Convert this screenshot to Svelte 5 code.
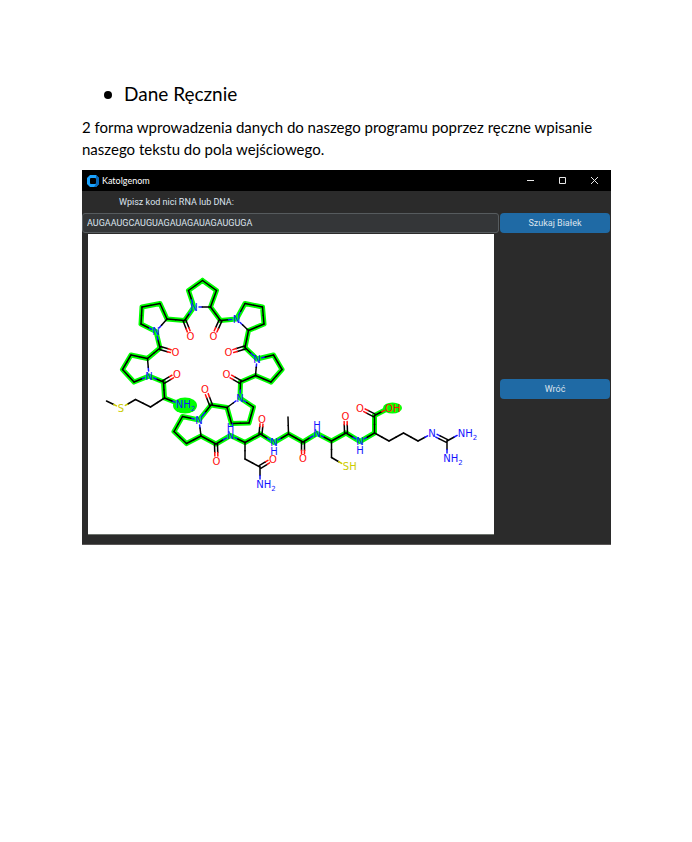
<script>
  let sequence = $state('AUGAAUGCAUGUAGAUAGAUAGAUGUGA');

  const colors = { C: '#000', N: '#1414ff', O: '#ff1010', S: '#cccc00' };

  // id: [x, y, element]
  const atoms = {
    m0: [106.5, 401, 'C'], mS: [121, 408, 'S'], m1: [135.5, 399.5, 'C'], m2: [150.5, 407, 'C'],
    mA: [164.5, 398, 'C'], mN: [179.5, 404, 'N', 'NH', 2], mC: [163.5, 382, 'C'], mO: [177, 374, 'O'],
    aN: [149, 376, 'N'], aA: [147.5, 358.5, 'C'], a1: [131, 355, 'C'], a2: [122.5, 369.5, 'C'], a3: [134, 382, 'C'],
    aC: [160, 348, 'C'], aO: [175.5, 352.5, 'O'],
    bN: [156, 331.5, 'N'], bA: [167, 319, 'C'], b1: [160, 303.5, 'C'], b2: [142, 307, 'C'], b3: [141, 324, 'C'],
    bC: [184.5, 320.5, 'C'], bO: [190.5, 336, 'O'],
    cN: [194, 307, 'N'], cA: [210.5, 307, 'C'], c1: [216.5, 290.5, 'C'], c2: [202.5, 280.5, 'C'], c3: [188.5, 290.5, 'C'],
    cC: [220.5, 320.5, 'C'], cO: [213.5, 336, 'O'],
    dN: [236.5, 319, 'N'], dA: [248.5, 330.5, 'C'], d1: [264, 324, 'C'], d2: [262.5, 307, 'C'], d3: [245, 303.5, 'C'],
    dC: [245, 347.5, 'C'], dO: [228.5, 352.5, 'O'],
    eN: [257, 359, 'N'], eA: [255.5, 375.5, 'C'], e1: [271, 382, 'C'], e2: [282, 369.5, 'C'], e3: [273.5, 355, 'C'],
    eC: [240.5, 382, 'C'], eO: [226.5, 374, 'O'],
    fN: [240, 398, 'N'], fA: [227, 407.5, 'C'], f1: [231.5, 423.5, 'C'], f2: [249, 423, 'C'], f3: [253.5, 407, 'C'],
    fC: [211, 405, 'C'], fO: [205, 389.5, 'O'],
    gN: [199, 420, 'N'], gA: [201, 436, 'C'], g1: [186.5, 443.5, 'C'], g2: [174, 431.5, 'C'], g3: [182.5, 416.5, 'C'],
    gC: [216, 444, 'C'], gO: [216.5, 461, 'O'],
    hN: [230.5, 435.5, 'N'], hA: [245, 442.5, 'C'], h1: [245, 459, 'C'], h2: [260, 467, 'C'],
    h3: [273, 459, 'O'], h4: [260, 484, 'N', 'NH', 2], hC: [260.5, 434, 'C'], hO: [262, 419, 'O'],
    iN: [274, 442.5, 'N'], iA: [288.5, 434, 'C'], i1: [288, 417, 'C'], iC: [303, 442, 'C'], iO: [303, 458.5, 'O'],
    jN: [317, 433.5, 'N'], jA: [331.5, 441, 'C'], j1: [331.5, 457.5, 'C'], jS: [346, 466, 'S', 'SH'],
    jC: [346, 433, 'C'], jO: [345.5, 416.5, 'O'],
    kN: [360, 441.5, 'N'], kA: [374.5, 433, 'C'], kC: [374.5, 415.5, 'C'], kO: [360, 408, 'O'], kH: [389, 408, 'O', 'OH'],
    k1: [389, 441, 'C'], k2: [403.5, 433, 'C'], k3: [418, 441, 'C'], k4: [432, 433.5, 'N'],
    k5: [447, 441, 'C'], k6: [461.5, 433, 'N', 'NH', 2], k7: [447, 458, 'N', 'NH', 2]
  };

  const marked = (
    'mN-mA mA-mC mC-aN aN-a3 a3-a2 a2-a1 a1-aA aA-aC aC-bN bN-b3 b3-b2 b2-b1 b1-bA bA-bC bC-cN ' +
    'cN-c3 c3-c2 c2-c1 c1-cA cA-cC cC-dN dN-d3 d3-d2 d2-d1 d1-dA dA-dC dC-eN eN-e3 e3-e2 e2-e1 e1-eA eA-eC eC-fN ' +
    'fN-f3 f3-f2 f2-f1 f1-fA fA-fC fC-gN gN-g3 g3-g2 g2-g1 g1-gA gA-gC gC-hN hN-hA hA-hC hC-iN iN-iA iA-iC iC-jN ' +
    'jN-jA jA-jC jC-kN kN-kA kA-kC kC-kH'
  ).split(' ');
  const plain = (
    'm0-mS mS-m1 m1-m2 m2-mA aN-aA bN-bA cN-cA dN-dA eN-eA fN-fA gN-gA hA-h1 h1-h2 h2-h4 iA-i1 ' +
    'jA-j1 j1-jS kA-k1 k1-k2 k2-k3 k3-k4 k5-k6 k5-k7'
  ).split(' ');
  const double = 'mC-mO aC-aO bC-bO cC-cO dC-dO eC-eO fC-fO gC-gO h2-h3 hC-hO iC-iO jC-jO kC-kO k4-k5'.split(' ');

  function segments(bond, isDouble) {
    const [a, b] = bond.split('-').map((id) => atoms[id]);
    const length = Math.hypot(b[0] - a[0], b[1] - a[1]);
    const ux = (b[0] - a[0]) / length;
    const uy = (b[1] - a[1]) / length;
    const start = a[2] === 'C' ? 0 : 5;
    const end = length - (b[2] === 'C' ? 0 : 5);
    const middle = length / 2;
    return (isDouble ? [-1.5, 1.5] : [0]).flatMap((shift) => {
      const at = (d) => `${a[0] + ux * d - uy * shift} ${a[1] + uy * d + ux * shift}`;
      return [
        { d: `M${at(start)}L${at(middle)}`, color: colors[a[2]] },
        { d: `M${at(middle)}L${at(end)}`, color: colors[b[2]] }
      ];
    });
  }

  const halo = marked
    .map((bond) => {
      const [a, b] = bond.split('-').map((id) => atoms[id]);
      return `M${a[0]} ${a[1]}L${b[0]} ${b[1]}`;
    })
    .join('');
  const lines = [
    ...[...marked, ...plain].flatMap((bond) => segments(bond, false)),
    ...double.flatMap((bond) => segments(bond, true))
  ];
  // Labels start half a glyph to the left of their atom.
  const halfWidth = { N: 3.7, O: 3.9, S: 3.2 };
  const letters = Object.values(atoms).filter((atom) => atom[2] !== 'C');
  const hydrogens = [[230.5, 427], [274, 451.5], [317, 425], [360, 450]];
</script>

<main>
  <ul>
    <li>Dane Ręcznie</li>
  </ul>
  <p>2 forma wprowadzenia danych do naszego programu poprzez ręczne wpisanie naszego tekstu do pola wejściowego.</p>

  <section class="window">
    <header>
      <svg class="logo" viewBox="0 0 12 12" aria-hidden="true">
        <path d="M3 0H9L12 3V9L9 12H3L0 9V3Z" fill="#1aa3ff" />
        <path d="M9 0L12 3V9L9 12H7L9 9V3Z" fill="#0868b8" />
        <rect x="3" y="3" width="6" height="6" rx="1" fill="#000" />
      </svg>
      <span class="title">Katolgenom</span>
      <button class="control" aria-label="Minimalizuj">
        <svg viewBox="0 0 9 9"><path d="M1 4.5H8" /></svg>
      </button>
      <button class="control" aria-label="Maksymalizuj">
        <svg viewBox="0 0 9 9"><path d="M1.5 1.5H7.5V7.5H1.5Z" /></svg>
      </button>
      <button class="control" aria-label="Zamknij">
        <svg viewBox="0 0 9 9"><path d="M1 1L8 8M8 1L1 8" /></svg>
      </button>
    </header>

    <div class="body">
      <div class="left">
        <label for="sequence">Wpisz kod nici RNA lub DNA:</label>
        <input id="sequence" type="text" bind:value={sequence} />
        <div class="canvas">
          <svg viewBox="88 234 406 300" role="img" aria-label="Peptyd">
            <path d={halo} class="halo" />
            <ellipse cx="185" cy="405.5" rx="12" ry="8" fill="#0f0" />
            <ellipse cx="392.5" cy="408" rx="9.5" ry="5.5" fill="#0f0" />
            {#each lines as line}
              <path d={line.d} stroke={line.color} class="bond" />
            {/each}
            {#each letters as [x, y, element, group, count]}
              <text x={x - halfWidth[element]} y={y + 3.5} fill={colors[element]}>{group ?? element}{#if count}<tspan class="small" dy="3">{count}</tspan>{/if}</text>
            {/each}
            {#each hydrogens as [x, y]}
              <text x={x - 3.7} y={y + 3.5} fill={colors.N}>H</text>
            {/each}
          </svg>
        </div>
      </div>
      <div class="right">
        <button class="action">Szukaj Białek</button>
        <button class="action back">Wróć</button>
      </div>
    </div>
  </section>
</main>

<style>
  :global(body) {
    margin: 0;
    background: #fff;
  }
  main {
    padding: 81px 81px 40px 82px;
    color: #000;
    font-family: Lato, 'Open Sans', sans-serif;
  }
  ul {
    margin: 0;
    padding-left: 42px;
    list-style: none;
    font-size: 19px;
    line-height: 26px;
  }
  li {
    display: flex;
    align-items: center;
  }
  li::before {
    content: '';
    width: 8px;
    height: 8px;
    margin: 2px 12px 0 -20px;
    border-radius: 50%;
    background: #000;
  }
  p {
    margin: 9px 0 10px;
    font-size: 15px;
    line-height: 22px;
  }
  .window {
    background: #2b2b2b;
    border-bottom: 1px solid #5a5757;
    color: #dce4ee;
    font-family: Roboto, sans-serif;
    font-size: 9px;
  }
  header {
    display: flex;
    align-items: center;
    height: 21px;
    padding: 0 1px 0 5px;
    background: #000;
    color: #fff;
  }
  .logo {
    width: 12px;
    height: 12px;
  }
  .title {
    flex: 1;
    margin-left: 3px;
    font-family: Lato, 'Open Sans', sans-serif;
  }
  button {
    border: 0;
    padding: 0;
    font: inherit;
    color: inherit;
  }
  .control {
    display: grid;
    place-items: center;
    width: 32px;
    height: 21px;
    background: none;
  }
  .control svg {
    width: 9px;
    height: 9px;
    fill: none;
    stroke: #e8e8e8;
  }
  .body {
    display: grid;
    grid-template-columns: 1fr 110px;
    column-gap: 1px;
    padding-right: 1px;
  }
  .left {
    display: flex;
    flex-direction: column;
  }
  label {
    padding-left: 37px;
    line-height: 22px;
  }
  input {
    box-sizing: border-box;
    width: 100%;
    height: 20px;
    padding: 0 4px;
    border: 1px solid #565b5e;
    border-radius: 3px;
    outline: 0;
    background: #343638;
    color: #dce4ee;
    font: inherit;
  }
  .canvas {
    margin: 1px 5px 9px 6px;
    background: #fff;
    border-bottom: 1px solid #6d736d;
  }
  .canvas svg {
    display: block;
    width: 100%;
  }
  .halo {
    fill: none;
    stroke: #0f0;
    stroke-width: 5;
    stroke-linecap: round;
  }
  .bond {
    stroke-width: 1.5;
    stroke-linecap: round;
  }
  text {
    font-family: 'DejaVu Sans', sans-serif;
    font-size: 10px;
  }
  .small {
    font-size: 7px;
  }
  .right {
    display: flex;
    flex-direction: column;
    padding-top: 22px;
  }
  .action {
    height: 20px;
    border-radius: 4px;
    background: #1f6aa5;
  }
  .back {
    margin-top: 146px;
  }
</style>
